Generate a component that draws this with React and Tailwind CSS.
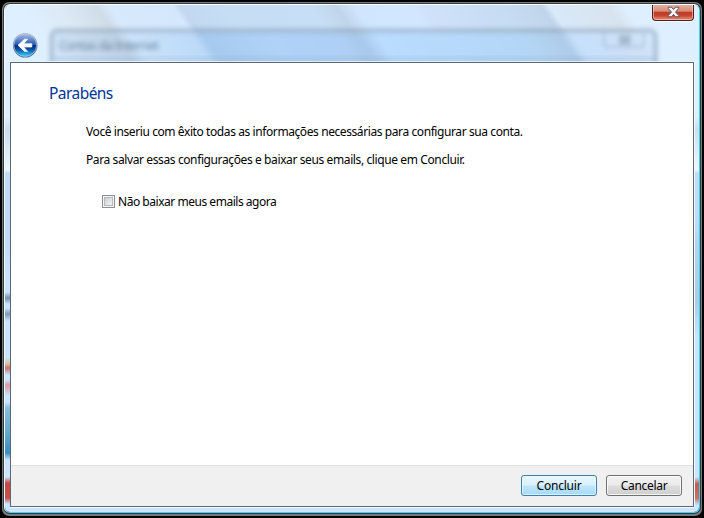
import React from "react";

function GlassHeader() {
  return (
    <svg className="absolute left-0 top-0" width="695" height="57" viewBox="5 5 695 57" aria-hidden="true">
      <defs>
        <linearGradient id="sky" x1="0" x2="700" y1="0" y2="0" gradientUnits="userSpaceOnUse" gradientTransform="translate(0 5) skewX(34.5)">
          <stop offset=".03" stopColor="#deefff" />
          <stop offset=".085" stopColor="#dce9f5" />
          <stop offset=".136" stopColor="#d0dde9" />
          <stop offset=".155" stopColor="#d7e9fc" />
          <stop offset=".245" stopColor="#d4e7fd" />
          <stop offset=".256" stopColor="#c2d8f0" />
          <stop offset=".314" stopColor="#c5def4" />
          <stop offset=".443" stopColor="#c6dff6" />
          <stop offset=".478" stopColor="#c1d5e9" />
          <stop offset=".506" stopColor="#d0e6ff" />
          <stop offset=".589" stopColor="#d2e6ff" />
          <stop offset=".6" stopColor="#cfe2fa" />
          <stop offset=".714" stopColor="#c6dcf3" />
          <stop offset=".772" stopColor="#c1d5ea" />
          <stop offset=".784" stopColor="#d8e9fa" />
          <stop offset=".868" stopColor="#d8e3ee" />
          <stop offset=".89" stopColor="#deefff" />
        </linearGradient>
        <linearGradient id="inner" x1="0" x2="700" y1="0" y2="0" gradientUnits="userSpaceOnUse" gradientTransform="translate(0 5) skewX(34.5)">
          <stop offset=".04" stopColor="#cfe3f7" />
          <stop offset=".136" stopColor="#bdd1e5" />
          <stop offset=".155" stopColor="#cbe3fa" />
          <stop offset=".245" stopColor="#bcdaf8" />
          <stop offset=".258" stopColor="#a6caee" />
          <stop offset=".357" stopColor="#b0d2f8" />
          <stop offset=".45" stopColor="#aecff5" />
          <stop offset=".48" stopColor="#a9c8ea" />
          <stop offset=".508" stopColor="#b9dcff" />
          <stop offset=".714" stopColor="#b4d6f6" />
          <stop offset=".772" stopColor="#aecbe8" />
          <stop offset=".786" stopColor="#c6e0fc" />
          <stop offset=".868" stopColor="#cde1f5" />
          <stop offset=".91" stopColor="#d3e8ff" />
        </linearGradient>
        <filter id="soft2" x="-20%" y="-40%" width="140%" height="180%"><feGaussianBlur stdDeviation="2.3" /></filter>
        <filter id="soft3" x="-20%" y="-60%" width="140%" height="220%"><feGaussianBlur stdDeviation="2.4" /></filter>
      </defs>
      <rect x="5" y="5" width="695" height="57" fill="url(#sky)" />
      <rect x="52" y="32" width="604" height="60" rx="5" fill="url(#inner)" filter="url(#soft2)" />
      <rect x="51.5" y="30.5" width="604" height="70" rx="6" fill="none" stroke="#6e86a0" strokeWidth="4.5" opacity=".4" filter="url(#soft2)" />
      <path d="M54 57H654v3H54z" fill="#8aa8c5" opacity=".35" filter="url(#soft2)" />
      <text x="59" y="49.5" fontSize="12.5" fontFamily='"Noto Sans", sans-serif' fill="#415d77" opacity=".72" textLength="100" filter="url(#soft3)">Contas da Internet</text>
      <g filter="url(#soft2)" opacity=".3">
        <path d="M604 32v12q0 3 3 3h34q3 0 3-3V32" fill="none" stroke="#6f8ba6" strokeWidth="2" />
        <path d="M620 36l10 8M630 36l-10 8" stroke="#3e5872" strokeWidth="5" />
      </g>
      <rect x="5" y="61" width="695" height="1" fill="#edf6ff" opacity=".75" />
    </svg>
  );
}

function BackButton() {
  return (
    <button aria-label="Voltar" className="h-[26px] w-[26px]">
      <svg width="26" height="26" viewBox="0 0 26 26">
        <defs>
          <linearGradient id="orb" x1="0" x2="0" y1="0" y2="1">
            <stop offset="0" stopColor="#a9bfe6" />
            <stop offset=".25" stopColor="#6488cc" />
            <stop offset=".48" stopColor="#2756b0" />
            <stop offset=".52" stopColor="#03287e" />
            <stop offset=".72" stopColor="#0a5cb0" />
            <stop offset="1" stopColor="#45d3ff" />
          </linearGradient>
          <linearGradient id="rim" x1="0" x2="0" y1="0" y2="1">
            <stop offset="0" stopColor="#a9b7cb" />
            <stop offset="1" stopColor="#4a648e" />
          </linearGradient>
        </defs>
        <circle cx="13.2" cy="13.2" r="12.3" fill="url(#rim)" />
        <circle cx="13.2" cy="13.2" r="11.3" fill="url(#orb)" stroke="#c6d8ef" strokeOpacity=".65" strokeWidth=".8" />
        <path d="M6 13.3 12.5 7.2h3.1L11.7 11.7H19.8v3.3H11.7l3.9 4.4h-3.1z" fill="#fff" stroke="#fff" strokeWidth=".7" strokeLinejoin="round" />
      </svg>
    </button>
  );
}

function CloseButton() {
  return (
    <button aria-label="Fechar" className="flex h-[17px] w-[42px] items-center justify-center rounded-b-[4px] border border-t-0 border-[#4b1f24] bg-[linear-gradient(180deg,#e9b5a8_0%,#d78a78_46%,#bd3a22_50%,#c5452f_72%,#e89078_100%)] shadow-[inset_0_0_0_1px_rgba(255,215,205,0.55),0_1px_0_#f4faff]">
      <svg width="13" height="12" viewBox="0 0 13 12">
        <path d="M1.2 1.2h3.3l2 2.3 2-2.3h3.3v1.2L8.5 6l3.3 3.6v1.2H8.5l-2-2.3-2 2.3H1.2V9.6L4.5 6 1.2 2.4z" fill="#f5f5f7" stroke="#535666" strokeWidth="1" />
      </svg>
    </button>
  );
}

export default function App() {
  return (
    <div className="h-[518px] w-[704px] overflow-hidden bg-black pl-[2px] pt-[2px] font-['Noto_Sans','Open_Sans',sans-serif] text-[12px] text-black">
      <div className="h-[514px] w-[700px] rounded-[7px] bg-[#77797b] pl-px pt-px">
        <div className="h-[511px] w-[698px] rounded-[7px] bg-[#303b42] pl-px pt-px">
          <div className="h-[509px] w-[696px] rounded-[6px] border-b border-l border-r border-t border-b-[#3bd4f5] border-l-[#f4faff] border-r-[#35d2f4] border-t-white">
            <div className="relative flex h-[507px] w-[694px] flex-col overflow-hidden rounded-[5px] bg-[linear-gradient(180deg,#deefff_0px,#deefff_112px,#c9dfef_124px,#eff6ff_165px,#c3dcf5_168px,#c4ddf6_240px,#cbe4ff_280px,#cbe4ff_507px)]">
              <GlassHeader />
              <div className="relative flex h-[57px] shrink-0 justify-between pl-[7px] pr-[5px]">
                <div className="pt-[27px]"><BackButton /></div>
                <div className="-mt-px"><CloseButton /></div>
              </div>
              <div className="relative flex h-[446px] shrink-0">
                <div className="h-full w-[5px] bg-[linear-gradient(180deg,transparent_230px,#758ea9_236px,transparent_242px,transparent_246px,#8198b3_252px,transparent_259px,transparent_296px,#dabd9d_302px,#c77270_306px,transparent_313px,transparent_318px,#dd9aa4_323px,transparent_334px,transparent_340px,#86bddd_346px,#65aacf_370px,#3b8fbe_391px,#cbe4ff_398px,transparent_415px,#c64942_421px,#ca5047_436px,transparent_442px)]" />
                <main className="flex h-[445px] w-[684px] flex-col border border-[#5c6875] bg-white shadow-[0_1px_0_#f4faff,1px_0_0_#f4faff]">
                  <div className="flex h-[402px] flex-col">
                    <h1 className="ml-[38px] mt-[18px] h-[24px] whitespace-nowrap text-[15.5px] leading-[24px] tracking-[-0.55px] text-[#003399]">Parabéns</h1>
                    <p className="ml-[75px] mt-[18px] h-[18px] whitespace-nowrap leading-[18px] tracking-[-0.41px]">Você inseriu com êxito todas as informações necessárias para configurar sua conta.</p>
                    <p className="ml-[75px] mt-[10px] h-[18px] whitespace-nowrap leading-[18px] tracking-[-0.39px]">Para salvar essas configurações e baixar seus emails, clique em Concluir.</p>
                    <label className="ml-[91px] mt-[24px] flex h-[18px] items-center gap-[3px] whitespace-nowrap">
                      <span className="-mt-px flex h-[13px] w-[13px] border border-[#8e8f8f] bg-[#f4f4f4] p-px"><span className="flex-1 border border-[#b5bac0] bg-[linear-gradient(135deg,#cbcfd5,#f3f3f3)]" /></span>
                      <span className="leading-[18px] tracking-[-0.47px]">Não baixar meus emails agora</span>
                    </label>
                  </div>
                  <footer className="flex h-[41px] items-start justify-end gap-[9px] border-t border-[#dfdfdf] bg-[#f0f0f0] pr-[11px] pt-[9px]">
                    <button className="flex h-[21px] w-[76px] items-center justify-center rounded-[3px] border border-[#3c7fb1] bg-[linear-gradient(180deg,#eaf6fd_0%,#d9f0fc_48%,#bee6fd_52%,#a7d9f5_100%)] tracking-[-0.2px] shadow-[inset_0_0_0_1px_rgba(235,250,255,0.75)]">Concluir</button>
                    <button className="flex h-[21px] w-[76px] items-center justify-center rounded-[3px] border border-[#707070] bg-[linear-gradient(180deg,#f2f2f2_0%,#ebebeb_48%,#dddddd_52%,#cfcfcf_100%)] tracking-[-0.3px] shadow-[inset_0_0_0_1px_rgba(252,252,252,0.85)]">Cancelar</button>
                  </footer>
                </main>
                <div className="ml-px h-full w-[4px] bg-[linear-gradient(180deg,transparent_150px,#b4d3ee_185px,#accbe6_240px,transparent_275px,transparent_415px,#c95850_422px,#cf6a62_436px,transparent_443px)]" />
              </div>
            </div>
          </div>
        </div>
      </div>
    </div>
  );
}
